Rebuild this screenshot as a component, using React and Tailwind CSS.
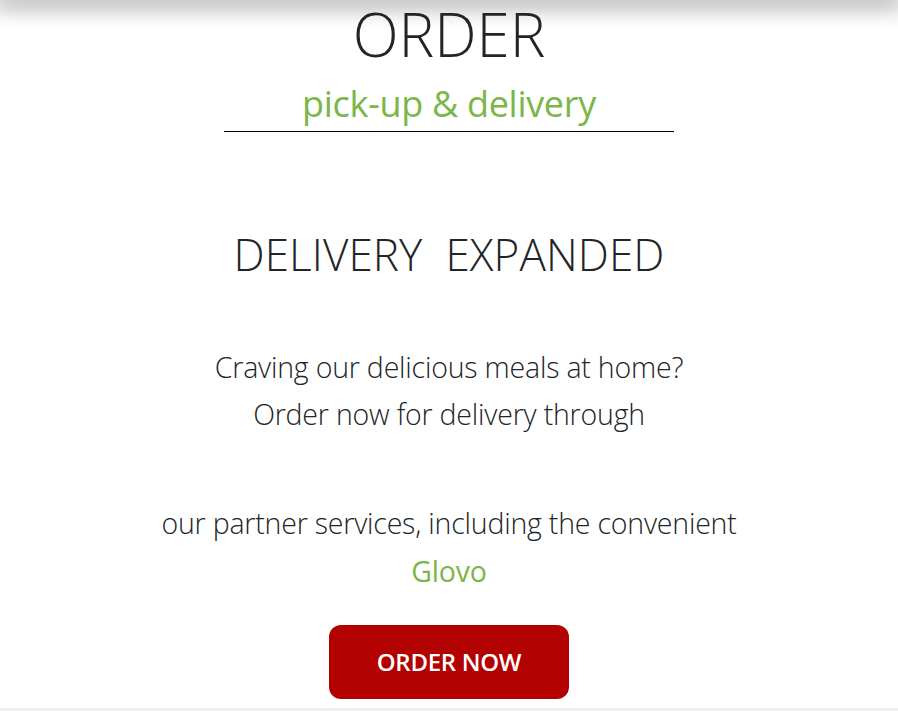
import React from 'react'

const App = () => {
  return (
    <div className="min-h-[711px] bg-white flex flex-col font-['Open_Sans',sans-serif] text-[#212529]">
      {/* shadow from the fixed navbar above */}
      <div className="h-0 w-full shadow-[0_0_22px_6px_rgba(0,0,0,0.45)]" />

      <div className="flex flex-col items-center">
        <h1 className="mt-[1px] text-[60px] leading-[66px] font-light">ORDER</h1>
        <p className="mt-[15px] text-[36px] leading-[44px] text-[#7ab648] tracking-[-0.3px]">pick-up &amp; delivery</p>
        <div className="mt-[5px] w-[450px] h-px bg-black" />

        <h2 className="mt-[95px] text-[44px] leading-[54px] font-light tracking-[0.1px]">
          DELIVERY&nbsp;&nbsp;EXPANDED
        </h2>

        <div className="mt-[63px] flex flex-col items-center text-[28.5px] leading-[47px] font-light tracking-[-0.2px]">
          <p>Craving our delicious meals at home?</p>
          <p>Order now for delivery through</p>
          <p className="mt-[62px]">our partner services, including the convenient</p>
          <p className="text-[#7ab648] font-normal leading-[48px]">Glovo</p>
        </div>

        <button className="mt-[30px] w-[240px] h-[74px] rounded-[12px] bg-[#b30000] text-white text-[24px] font-semibold tracking-[-0.3px]">
          ORDER NOW
        </button>
      </div>

      <div className="mt-[9px] h-[4px] bg-[#efefef]" />
    </div>
  )
}

export default App
